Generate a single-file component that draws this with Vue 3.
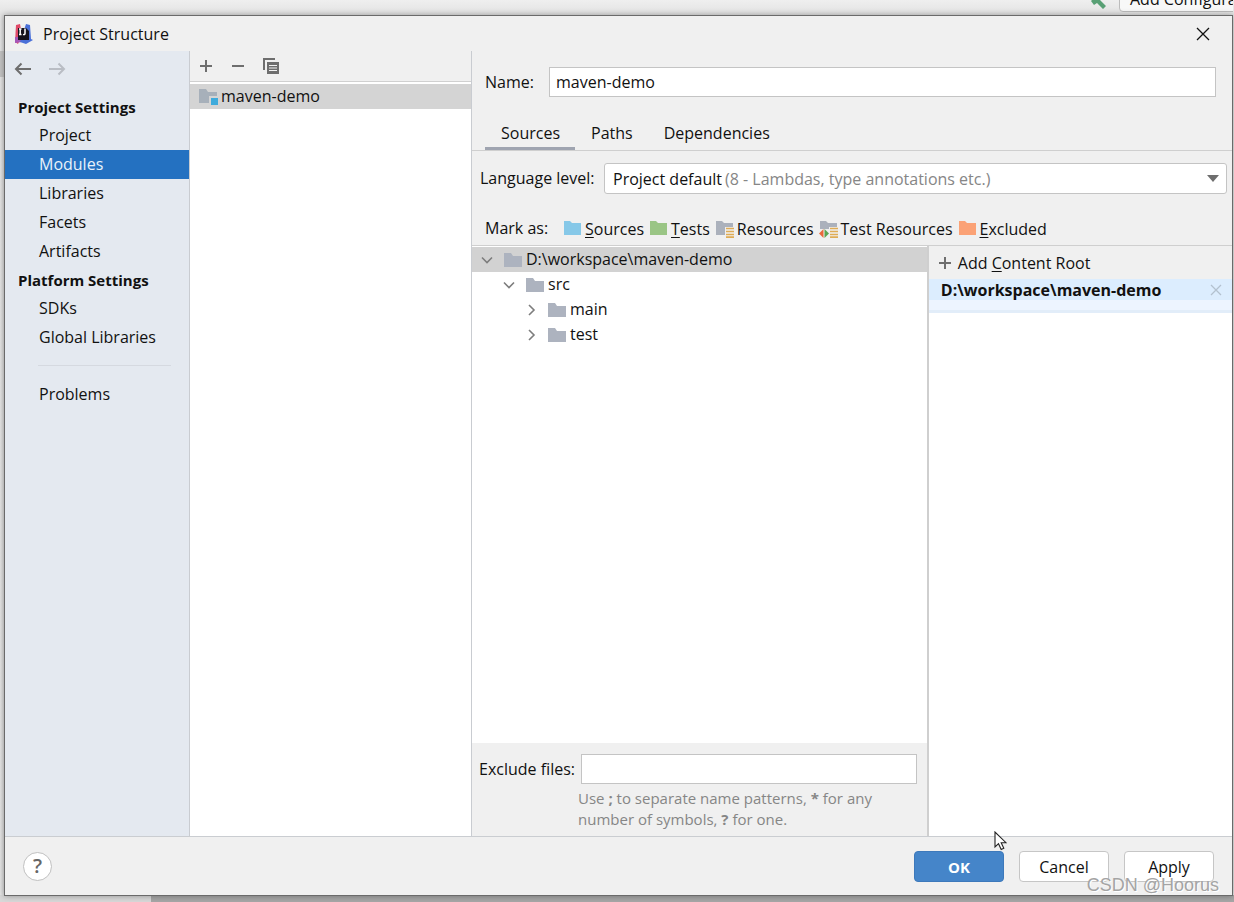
<script setup>
import { ref } from 'vue'

const moduleName = ref('maven-demo')
const excludePatterns = ref('')

const groups = [
  { title: 'Project Settings', items: ['Project', 'Modules', 'Libraries', 'Facets', 'Artifacts'] },
  { title: 'Platform Settings', items: ['SDKs', 'Global Libraries'] },
]
const current = ref('Modules')
const tabs = ['Sources', 'Paths', 'Dependencies']
const activeTab = ref('Sources')

const marks = [
  { key: 'S', rest: 'ources', tone: 'blue' },
  { key: 'T', rest: 'ests', tone: 'green' },
  { key: '', rest: 'Resources', tone: 'gray', lines: true },
  { key: '', rest: 'Test Resources', tone: 'gray', lines: true, arrows: true },
  { key: 'E', rest: 'xcluded', tone: 'orange' },
]

const tree = [
  { name: 'D:\\workspace\\maven-demo', level: 0, open: true, selected: true },
  { name: 'src', level: 1, open: true },
  { name: 'main', level: 2, open: false },
  { name: 'test', level: 2, open: false },
]
</script>

<template>
  <div class="desktop">
    <div class="ide-bar">
      <svg class="hammer" width="16" height="16" viewBox="0 0 16 16"><path d="M0 8L5 3L15 13L12 16L6 10L3 12Z" fill="#59a075" /></svg>
      <button class="config" type="button">Add Configuration...</button>
    </div>
    <section class="dialog" aria-labelledby="dialog-title">
      <header class="titlebar">
        <svg class="logo" width="20" height="22" viewBox="0 0 20 22">
          <path d="M2 2L6 1L8 12L4 21L1 19Z" fill="#e04a68" />
          <path d="M1 14L6 14L8 19L1 20Z" fill="#a557b8" />
          <path d="M12 1L16 2L17 16L19 17L12 21L6 19Z" fill="#4a70d8" />
          <path d="M4 5H12L15 8V17H4Z" fill="#15131c" />
          <path d="M5 6H7.500M6.200 6V11.500M5 11.500H7.500M11 5.500V10.500Q11 12 9 11.500" stroke="#fff" stroke-width="1.500" fill="none" />
        </svg>
        <h1 id="dialog-title">Project Structure</h1>
        <button class="close" type="button" aria-label="Close">
          <svg width="14" height="14" viewBox="0 0 14 14"><path d="M1 1L13 13M13 1L1 13" stroke="#111" stroke-width="1.300" /></svg>
        </button>
      </header>

      <div class="body">
        <nav class="sidebar">
          <div class="history">
            <button type="button" aria-label="Back">
              <svg width="18" height="14" viewBox="0 0 18 14"><path d="M17 7H2M7.500 1.500L2 7L7.500 12.500" stroke="#6e6e6e" stroke-width="2" fill="none" /></svg>
            </button>
            <button type="button" aria-label="Forward">
              <svg width="18" height="14" viewBox="0 0 18 14"><path d="M1 7H16M10.500 1.500L16 7L10.500 12.500" stroke="#b9bdc4" stroke-width="2" fill="none" /></svg>
            </button>
          </div>
          <template v-for="g in groups" :key="g.title">
            <h2>{{ g.title }}</h2>
            <button
              v-for="item in g.items" :key="item" type="button" class="nav-item"
              :class="{ active: current === item }" @click="current = item"
            >{{ item }}</button>
          </template>
          <hr />
          <button type="button" class="nav-item">Problems</button>
        </nav>

        <div class="modules">
          <div class="toolbar">
            <button type="button" aria-label="Add">
              <svg width="14" height="14" viewBox="0 0 14 14"><path d="M7 1V13M1 7H13" stroke="#6e6e6e" stroke-width="2" /></svg>
            </button>
            <button type="button" aria-label="Remove">
              <svg width="14" height="14" viewBox="0 0 14 14"><path d="M1 7H13" stroke="#6e6e6e" stroke-width="2" /></svg>
            </button>
            <button type="button" aria-label="Copy">
              <svg width="16" height="16" viewBox="0 0 16 16">
                <path d="M1 12V1H12" stroke="#6e6e6e" stroke-width="2" fill="none" />
                <path d="M4 4H16V16H4Z" fill="#6e6e6e" />
                <path d="M6 7.500H14M6 10H14M6 12.500H14" stroke="#f2f2f2" stroke-width="1.200" />
              </svg>
            </button>
          </div>
          <ul>
            <li>
              <svg width="20" height="18" viewBox="0 0 20 18">
                <path d="M0 1H7L9 4H18V15H0Z" fill="#a7b0ba" />
                <path d="M10 8H20V18H10Z" fill="#d4d4d4" />
                <path d="M12 10H19V17H12Z" fill="#3fabdc" />
              </svg>
              <span>maven-demo</span>
            </li>
          </ul>
        </div>

        <main>
          <div class="name-row">
            <label for="module-name">Name:</label>
            <input id="module-name" v-model="moduleName" type="text" />
          </div>
          <div class="tabs" role="tablist">
            <button
              v-for="t in tabs" :key="t" type="button" role="tab" :aria-selected="activeTab === t"
              :class="{ active: activeTab === t }" @click="activeTab = t"
            >{{ t }}</button>
          </div>
          <div class="level-row">
            <label for="level">Language level:</label>
            <div class="combo">
              <select id="level"><option>Project default</option></select>
              <span>(8 - Lambdas, type annotations etc.)</span>
              <svg width="12" height="7" viewBox="0 0 12 7"><path d="M0 0H12L6 7Z" fill="#6e6e6e" /></svg>
            </div>
          </div>
          <div class="mark-row">
            <span class="mark-label">Mark as:</span>
            <button v-for="m in marks" :key="m.rest" type="button">
              <svg width="20" height="20" viewBox="0 0 20 20" :class="m.tone">
                <path d="M1 3H7L9 5H18V17H1Z" fill="currentColor" />
                <g v-if="m.lines">
                  <path d="M10 9H20V20H10Z" fill="#f0f0f0" />
                  <path d="M11 10.500H19M11 13.500H19M11 16.500H19M11 19.200H19" stroke="#dfac55" stroke-width="1.700" />
                </g>
                <g v-if="m.arrows">
                  <path d="M0 11H10V20H0Z" fill="#f0f0f0" />
                  <path d="M4.500 11V20L0 15.500Z" fill="#e8693c" />
                  <path d="M5.500 11V20L10 15.500Z" fill="#5ba551" />
                </g>
              </svg>
              <span><u v-if="m.key">{{ m.key }}</u>{{ m.rest }}</span>
            </button>
          </div>

          <div class="split">
            <div class="tree-pane">
              <ul class="tree" role="tree">
                <li
                  v-for="n in tree" :key="n.name" role="treeitem" :aria-expanded="n.open"
                  :class="['level-' + n.level, { selected: n.selected }]"
                >
                  <svg class="chevron" width="14" height="14" viewBox="0 0 14 14">
                    <path :d="n.open ? 'M2 4.500L7 9.500L12 4.500' : 'M5 2L10 7L5 12'" stroke="#7d7d7d" stroke-width="1.600" fill="none" />
                  </svg>
                  <svg class="folder" width="18" height="14" viewBox="0 0 18 14"><path d="M0 0H7L9 3H18V14H0Z" fill="#adb3bf" /></svg>
                  <span>{{ n.name }}</span>
                </li>
              </ul>
              <div class="exclude">
                <label for="exclude">Exclude files:</label>
                <input id="exclude" v-model="excludePatterns" type="text" />
                <p>Use <b>;</b> to separate name patterns, <b>*</b> for any number of symbols, <b>?</b> for one.</p>
              </div>
            </div>
            <aside>
              <button class="add-root" type="button">
                <svg width="14" height="14" viewBox="0 0 14 14"><path d="M7 1V13M1 7H13" stroke="#6e6e6e" stroke-width="2" /></svg>
                <span>Add <u>C</u>ontent Root</span>
              </button>
              <div class="root">
                <strong>D:\workspace\maven-demo</strong>
                <button type="button" aria-label="Remove content root">
                  <svg width="12" height="12" viewBox="0 0 12 12"><path d="M1 1L11 11M11 1L1 11" stroke="#b3c1cf" stroke-width="1.300" /></svg>
                </button>
              </div>
              <div class="root-detail"></div>
            </aside>
          </div>
        </main>
      </div>

      <footer>
        <button class="help" type="button" aria-label="Help">?</button>
        <button class="btn primary" type="button">OK</button>
        <button class="btn" type="button">Cancel</button>
        <button class="btn" type="button">Apply</button>
      </footer>
    </section>
    <svg class="cursor" width="13" height="20" viewBox="0 0 13 20"><path d="M1 1V16L4.500 12.700L7.200 18.500L9.800 17.300L7.200 11.700H12Z" fill="#fff" stroke="#222" stroke-width="1.100" /></svg>
    <div class="watermark">CSDN @Hoorus</div>
  </div>
</template>

<style>
body { margin: 0; }
</style>

<style scoped>
.desktop {
  position: relative;
  box-sizing: border-box;
  min-height: 100vh;
  display: flex;
  flex-direction: column;
  padding: 0 1px 6px 4px;
  overflow: hidden;
  background:
    linear-gradient(#c4c4c4, #c4c4c4) 0 51px / 5px 26px no-repeat,
    linear-gradient(#d8d8d8, #d8d8d8) 0 100% / 151px 7px no-repeat,
    linear-gradient(#a6a6a6, #a6a6a6) 0 100% / 100% 7px no-repeat,
    linear-gradient(90deg, #e6e6e6, #d6d6d6) 0 0 / 5px 100% no-repeat,
    #e8e8e8;
  font: 16px/22px "Open Sans", "Noto Sans", sans-serif;
  color: #111;
}
button, input, select { font: inherit; color: inherit; box-sizing: border-box; }
button { border: 0; padding: 0; background: none; display: flex; align-items: center; }
h1, h2, p, ul { margin: 0; padding: 0; list-style: none; font-size: inherit; }
svg { display: block; flex: none; }
u { text-underline-offset: 2px; text-decoration-thickness: 1px; }
input { background: #fff; border: 1px solid #c4c4c4; height: 30px; padding: 0 6px; min-width: 0; outline: 0; }

.ide-bar { height: 15px; display: flex; justify-content: flex-end; align-items: flex-end; overflow: hidden; background: linear-gradient(#efefef, #e2e2e2); margin-left: -4px; }
.hammer { margin: 0 12px 6px 0; }
.config { width: 140px; height: 30px; margin: 0 -26px 3px 0; padding: 4px 0 0 10px; border: 1px solid #bcbcbc; border-radius: 4px; background: #f8f8f8; white-space: nowrap; }

.dialog { flex: 1; display: flex; flex-direction: column; border: 1px solid #6a6a6a; background: #f0f0f0; box-shadow: 0 0 6px #0005; }
.titlebar { height: 35px; display: flex; align-items: center; padding: 0 22px 0 9px; gap: 9px; }
.titlebar h1 { font-weight: 400; flex: 1; }

.body { flex: 1; display: flex; border-bottom: 1px solid #cacdd1; }
.sidebar { width: 184px; border-right: 1px solid #c9ccd1; background: #e4e9f0; box-sizing: content-box; }
.history { display: flex; gap: 16px; padding: 11px 9px 17px; }
.sidebar h2 { font-size: 15px; font-weight: 700; line-height: 28px; padding-left: 13px; }
.nav-item { width: 100%; height: 29px; padding: 0 0 1px 34px; }
.nav-item.active { background: #2471c1; color: #e8f1fa; }
.sidebar hr { margin: 13px 18px 14px 33px; border: 0; border-top: 1px solid #d5d9e0; }

.modules { width: 281px; border-right: 1px solid #c9ccd1; background: #fff; }
.toolbar { height: 30px; display: flex; align-items: center; gap: 18px; padding-left: 9px; background: #f0f0f0; border-bottom: 1px solid #d0d0d0; }
.modules ul { padding-top: 2px; }
.modules li { display: flex; align-items: center; gap: 2px; height: 25px; padding-left: 9px; background: #d4d4d4; }
li span { padding-bottom: 2px; }

main { flex: 1; min-width: 0; display: flex; flex-direction: column; }
.name-row { display: flex; align-items: center; padding: 16px 16px 0 13px; }
.name-row label { width: 64px; }
.name-row input { flex: 1; }
.tabs { display: flex; margin-top: 18px; padding-left: 13px; border-bottom: 1px solid #cfcfcf; height: 35px; }
.tabs button { padding: 3px 15px 0 16px; height: 35px; border-bottom: 3px solid transparent; }
.tabs button.active { border-color: #9fa4b0; }
.level-row { display: flex; align-items: center; padding: 12px 5px 0 8px; }
.level-row label { width: 124px; padding-bottom: 2px; }
.combo { flex: 1; display: flex; align-items: center; height: 31px; box-sizing: border-box; border: 1px solid #c4c4c4; border-radius: 3px; background: #fff; padding: 0 7px 0 8px; }
.combo select { appearance: none; border: 0; background: none; padding: 0; outline: 0; }
.combo span { flex: 1; margin-left: 3px; color: #868686; }
.mark-row { display: flex; align-items: center; gap: 5px; height: 34px; padding: 17px 0 0 13px; white-space: nowrap; }
.mark-label { width: 73px; }
.mark-row button { gap: 2px; }
.mark-row button span { padding-top: 2px; }
.blue { color: #86c8e8; }
.green { color: #9ac585; }
.gray { color: #abb1bc; }
.orange { color: #fba276; }

.split { flex: 1; display: flex; border-top: 1px solid #cfcfcf; }
.tree-pane { flex: 3; min-width: 0; display: flex; flex-direction: column; border-right: 2px solid #cfcfcf; }
.tree { flex: 1; background: #fff; padding-top: 1px; }
.tree li { display: flex; align-items: center; height: 25px; padding-left: 8px; }
.tree li.level-1 { padding-left: 30px; }
.tree li.level-2 { padding-left: 52px; }
.tree li.selected { background: #d2d2d2; }
.chevron { margin-right: 10px; }
.folder { margin-right: 4px; }
.exclude { display: grid; grid-template-columns: 102px 1fr; align-items: center; padding: 11px 10px 6px 7px; row-gap: 4px; }
.exclude p { grid-column: 2; margin-left: -3px; font-size: 15px; line-height: 21px; color: #868686; }

aside { flex: 2; min-width: 0; background: #fff; }
.add-root { width: 100%; height: 33px; padding-left: 9px; gap: 6px; background: #f0f0f0; }
.root { display: flex; align-items: center; justify-content: space-between; height: 21px; padding: 0 10px 0 12px; background: #dcedfe; }
.root-detail { height: 10px; background: #edf4ff; border-bottom: 3px solid #e2edf9; }

footer { height: 58px; display: flex; align-items: center; gap: 15px; padding: 0 18px; }
.help { width: 29px; height: 29px; justify-content: center; margin-right: auto; border: 1px solid #c0c0c0; border-radius: 50%; background: #fff; color: #666; font-size: 20px; font-weight: 600; }
.btn { width: 90px; height: 31px; padding-top: 2px; justify-content: center; border: 1px solid #c6c6c6; border-radius: 4px; background: #fff; }
.btn.primary { background: #4585c9; border-color: #3d79bb; color: #fff; font-size: 15px; font-weight: 700; }

.cursor { position: absolute; right: 227px; bottom: 51px; }
.watermark { position: absolute; right: 15px; bottom: 6px; font: 18px/22px "Liberation Sans", Arial, sans-serif; color: #a4a4a4; text-shadow: 1px 1px 0 #fff; }
</style>
